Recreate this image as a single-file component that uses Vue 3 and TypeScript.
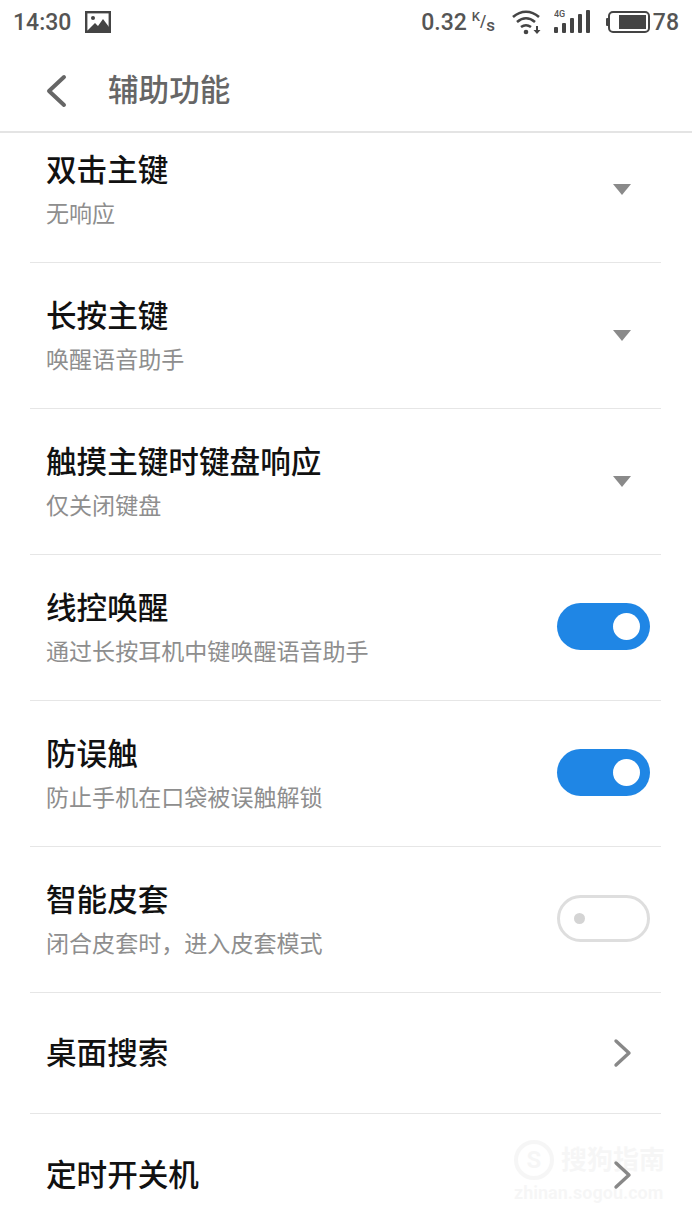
<script setup lang="ts">
interface Row {
  title: string
  sub?: string
  kind: 'select' | 'on' | 'off' | 'link'
}

const rows: Row[] = [
  { title: '双击主键', sub: '无响应', kind: 'select' },
  { title: '长按主键', sub: '唤醒语音助手', kind: 'select' },
  { title: '触摸主键时键盘响应', sub: '仅关闭键盘', kind: 'select' },
  { title: '线控唤醒', sub: '通过长按耳机中键唤醒语音助手', kind: 'on' },
  { title: '防误触', sub: '防止手机在口袋被误触解锁', kind: 'on' },
  { title: '智能皮套', sub: '闭合皮套时，进入皮套模式', kind: 'off' },
  { title: '桌面搜索', kind: 'link' },
  { title: '定时开关机', kind: 'link' },
]
</script>

<template>
  <div class="page">
    <div class="status">
      <div class="status-left">
        <span class="time">14:30</span>
        <svg width="26" height="22" viewBox="0 0 26 22">
          <rect x="1.2" y="1.2" width="23.6" height="19.6" fill="none" stroke="#444" stroke-width="2.4" />
          <path d="M2 20l8-8 3 3 5-7 6 8v4z" fill="#444" />
          <circle cx="8" cy="7" r="2" fill="#444" />
        </svg>
      </div>
      <div class="status-right">
        <span class="speed">0.32</span>
        <span class="unit"><sup>K</sup>/<sub>s</sub></span>
        <svg class="wifi" width="32" height="26" viewBox="0 0 32 26">
          <path d="M2 8C10 1 20 1 28 8M6 13c6-5 12-5 18 0M10 18c3.500-2.500 6.500-2.500 10 0" fill="none" stroke="#444" stroke-width="2.600" />
          <circle cx="15" cy="23" r="2.300" fill="#444" />
          <path d="M25 17h2v4h2.500l-3.500 4-3.500-4H25z" fill="#444" />
        </svg>
        <svg class="signal" width="36" height="26" viewBox="0 0 36 26">
          <text x="0" y="8" class="net">4G</text>
          <rect x="0" y="18" width="4" height="6" rx="1" fill="#444" />
          <rect x="8" y="14" width="4" height="10" rx="1" fill="#444" />
          <rect x="16" y="9" width="4" height="15" rx="1" fill="#444" />
          <rect x="24" y="5" width="4" height="19" rx="1" fill="#444" />
          <rect x="32" y="1" width="4" height="23" rx="1" fill="#444" />
        </svg>
        <svg class="battery" width="44" height="24" viewBox="0 0 44 24">
          <rect x="0" y="8" width="3" height="8" rx="1" fill="#444" />
          <rect x="3" y="2" width="40" height="20" rx="4" fill="none" stroke="#444" stroke-width="2" />
          <rect x="13" y="5" width="27" height="14" fill="#444" />
        </svg>
        <span class="level">78</span>
      </div>
    </div>

    <header class="header">
      <svg class="back" width="24" height="34" viewBox="0 0 24 34">
        <path d="M20 3L5 17l15 14" fill="none" stroke="#666" stroke-width="4" stroke-linecap="round" stroke-linejoin="round" />
      </svg>
      <h1 class="heading">辅助功能</h1>
    </header>

    <main class="list-wrap">
      <ul class="list">
        <li v-for="row in rows" :key="row.title" class="row" :class="{ short: row.kind === 'link' }">
          <div class="text">
            <div class="title">{{ row.title }}</div>
            <div v-if="row.sub" class="sub">{{ row.sub }}</div>
          </div>
          <span v-if="row.kind === 'select'" class="caret"></span>
          <span v-else-if="row.kind === 'on'" class="switch on"><i></i></span>
          <span v-else-if="row.kind === 'off'" class="switch off"><i></i></span>
          <svg v-else class="chevron" width="20" height="30" viewBox="0 0 20 30">
            <path d="M3 3l13 12L3 27" fill="none" stroke="#888" stroke-width="3.400" stroke-linecap="round" stroke-linejoin="round" />
          </svg>
        </li>
      </ul>
    </main>

    <div class="watermark">
      <div class="wm-top">
        <span class="wm-logo">S</span>
        <span class="wm-name">搜狗指南</span>
      </div>
      <div class="wm-url">zhinan.sogou.com</div>
    </div>
  </div>
</template>

<style scoped>
.page {
  position: relative;
  width: 692px;
  height: 1230px;
  overflow: hidden;
  display: flex;
  flex-direction: column;
  background: #fff;
  font-family: Roboto, "Noto Sans CJK SC", sans-serif;
}

.status {
  flex: none;
  height: 44px;
  padding: 0 13px;
  display: flex;
  align-items: center;
  justify-content: space-between;
  color: #555;
}

.status-left {
  display: flex;
  align-items: center;
  gap: 14px;
}

.time {
  font-size: 23px;
  font-weight: 500;
}

.status-right {
  display: flex;
  align-items: center;
}

.speed {
  font-size: 23px;
  font-weight: 500;
}

.unit {
  width: 25px;
  margin-left: 5px;
  font-size: 16px;
  line-height: 20px;
  font-weight: 500;
  white-space: nowrap;
}

.unit sup {
  font-size: 13px;
  vertical-align: 6px;
  line-height: 0;
}

.unit sub {
  font-size: 17px;
  vertical-align: -4px;
  line-height: 0;
}

.wifi {
  margin-left: 14px;
}

.signal {
  margin-left: 11px;
}

.net {
  font-size: 9px;
  font-weight: 500;
  fill: #555;
}

.battery {
  margin-left: 16px;
}

.level {
  margin-left: 3px;
  font-size: 23px;
  font-weight: 500;
}

.header {
  flex: none;
  height: 81px;
  padding: 6px 0 0 44px;
  display: flex;
  align-items: center;
  gap: 40px;
  border-bottom: 2px solid #e4e4e4;
}

.back {
  flex: none;
}

.heading {
  margin: 0;
  font-size: 30.6px;
  line-height: 40px;
  font-weight: 500;
  color: #666;
}

.list-wrap {
  flex: 1;
  overflow: hidden;
}

.list {
  list-style: none;
  margin: -16px 0 0;
  padding: 0 31px 0 30px;
}

.row {
  box-sizing: border-box;
  height: 146px;
  padding-right: 11px;
  display: flex;
  align-items: center;
  justify-content: space-between;
  border-bottom: 1px solid #e6e6e6;
}

.row.short {
  height: 121px;
}

.row:last-child {
  border-bottom: none;
}

.text {
  padding: 6px 0 0 16px;
}

.short .text {
  padding-top: 2px;
}

.title {
  font-size: 30.6px;
  line-height: 44px;
  font-weight: 500;
  color: #111;
}

.sub {
  font-size: 23.05px;
  line-height: 44px;
  color: #8e8e8e;
}

.caret {
  margin-right: 19px;
  width: 0;
  height: 0;
  border-left: 9px solid transparent;
  border-right: 9px solid transparent;
  border-top: 11px solid #8a8a8a;
}

.switch {
  box-sizing: border-box;
  width: 93px;
  height: 47px;
  margin-bottom: 2px;
  border-radius: 24px;
  display: flex;
  align-items: center;
}

.switch.on {
  background: #1f86e5;
  justify-content: flex-end;
  padding-right: 10px;
}

.switch.on i {
  width: 27px;
  height: 27px;
  border-radius: 50%;
  background: #fff;
}

.switch.off {
  border: 3px solid #dedede;
  padding-left: 14px;
}

.switch.off i {
  width: 11px;
  height: 11px;
  border-radius: 50%;
  background: #d4d4d4;
}

.chevron {
  margin-right: 17px;
}

.watermark {
  position: absolute;
  left: 514px;
  top: 1140px;
  opacity: 0.06;
  color: #777;
  pointer-events: none;
}

.wm-top {
  display: flex;
  align-items: center;
  gap: 7px;
}

.wm-logo {
  box-sizing: border-box;
  width: 40px;
  height: 40px;
  border: 4px solid #777;
  border-radius: 50%;
  display: flex;
  align-items: center;
  justify-content: center;
  font-size: 24px;
  font-weight: 700;
}

.wm-name {
  font-size: 26px;
  line-height: 40px;
  font-weight: 700;
}

.wm-url {
  margin-top: 2px;
  font-size: 18px;
  line-height: 22px;
  font-weight: 700;
}
</style>
